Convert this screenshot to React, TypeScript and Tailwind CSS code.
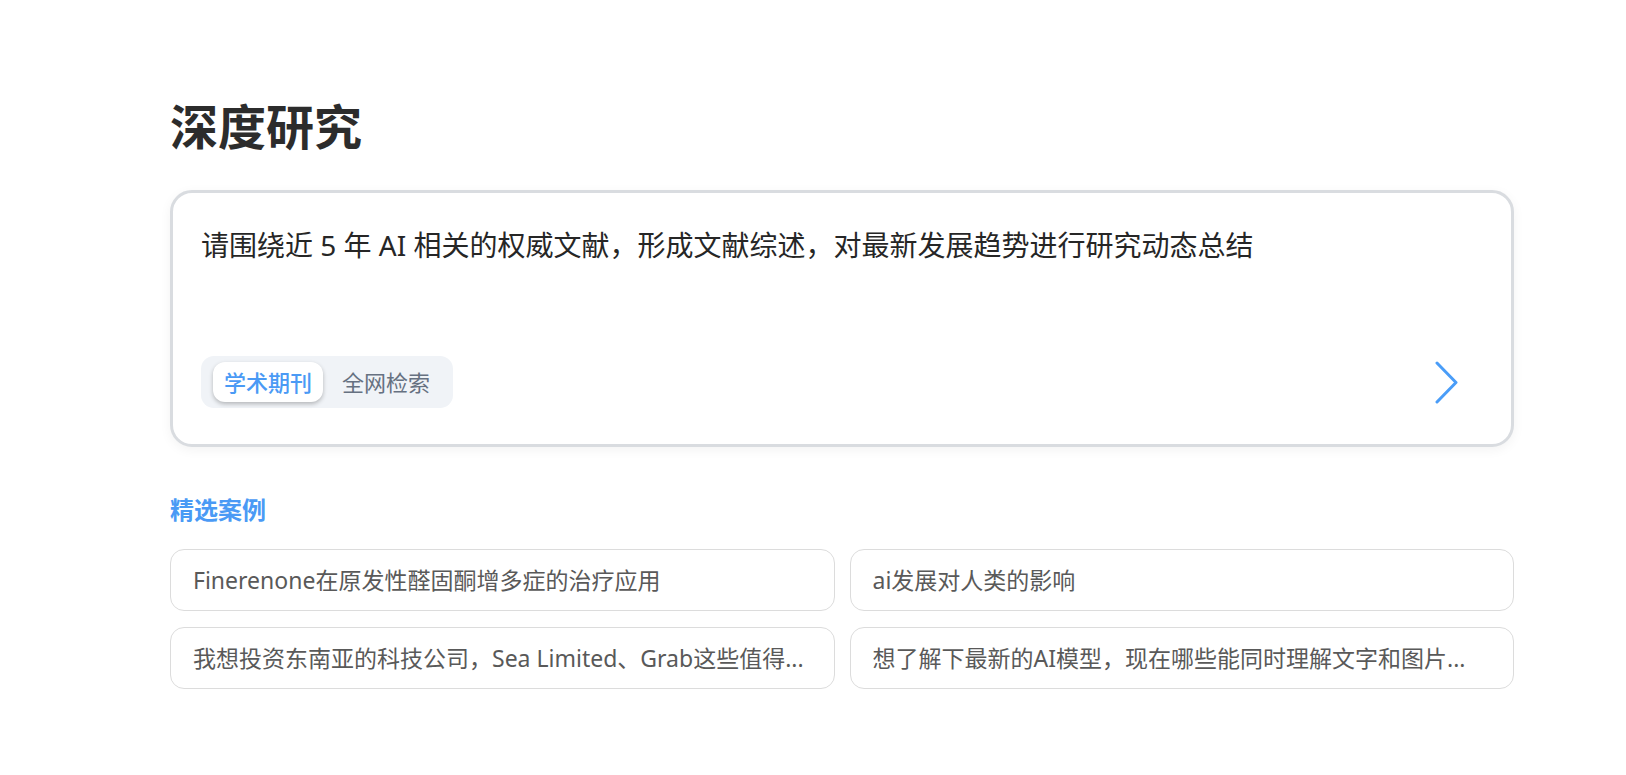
import React from "react";

const cases = [
  "Finerenone在原发性醛固酮增多症的治疗应用",
  "ai发展对人类的影响",
  "我想投资东南亚的科技公司，Sea Limited、Grab这些值得...",
  "想了解下最新的AI模型，现在哪些能同时理解文字和图片...",
];

export default function App() {
  return (
    <div
      className="min-h-[775px] w-full bg-white"
      style={{ fontFamily: '"Noto Sans", "Noto Sans CJK SC", sans-serif' }}
    >
      <div className="ml-[170px] w-[1344px] pt-[98px]">
        <h1 className="text-[48px] leading-[58px] font-bold text-[#2c2c2c]">深度研究</h1>

        <div className="mt-[34px] flex h-[257px] flex-col rounded-[22px] border-[3px] border-[#d9dce0] bg-white px-[28px] pt-[32px] pb-[36px] shadow-[0_3px_12px_rgba(0,0,0,0.05)]">
          <p className="text-[28px] leading-[40px] text-[#262626]">
            请围绕近 5 年 AI 相关的权威文献，形成文献综述，对最新发展趋势进行研究动态总结
          </p>
          <div className="flex-1" />
          <div className="flex h-[52px] items-center justify-between">
            <div className="flex h-[52px] items-center gap-[8px] rounded-[13px] bg-[#f0f3f7] px-[12px]">
              <div className="flex h-[40px] items-center rounded-[12px] bg-white px-[11px] text-[22px] font-medium text-[#4a9af5] shadow-[0_2px_4px_rgba(0,0,0,0.25)]">
                学术期刊
              </div>
              <div className="flex h-[40px] items-center px-[11px] text-[22px] text-[#667181]">
                全网检索
              </div>
            </div>
            <svg
              width="24"
              height="43"
              viewBox="0 0 24 43"
              className="mr-[25px]"
              fill="none"
              stroke="#4a9df8"
              strokeWidth="3"
              strokeLinecap="round"
              strokeLinejoin="round"
            >
              <polyline points="3,2 22,21.5 3,41" />
            </svg>
          </div>
        </div>

        <h2 className="mt-[47px] text-[24px] leading-[32px] font-bold text-[#4a9af5]">精选案例</h2>

        <div className="mt-[23px] grid grid-cols-2 gap-x-[15px] gap-y-[16px]">
          {cases.map((c) => (
            <div
              key={c}
              className="flex h-[62px] items-center overflow-hidden rounded-[14px] border border-[#dcdcdc] bg-white px-[22px]"
            >
              <span className="truncate text-[23px] text-[#595959]">{c}</span>
            </div>
          ))}
        </div>
      </div>
    </div>
  );
}
